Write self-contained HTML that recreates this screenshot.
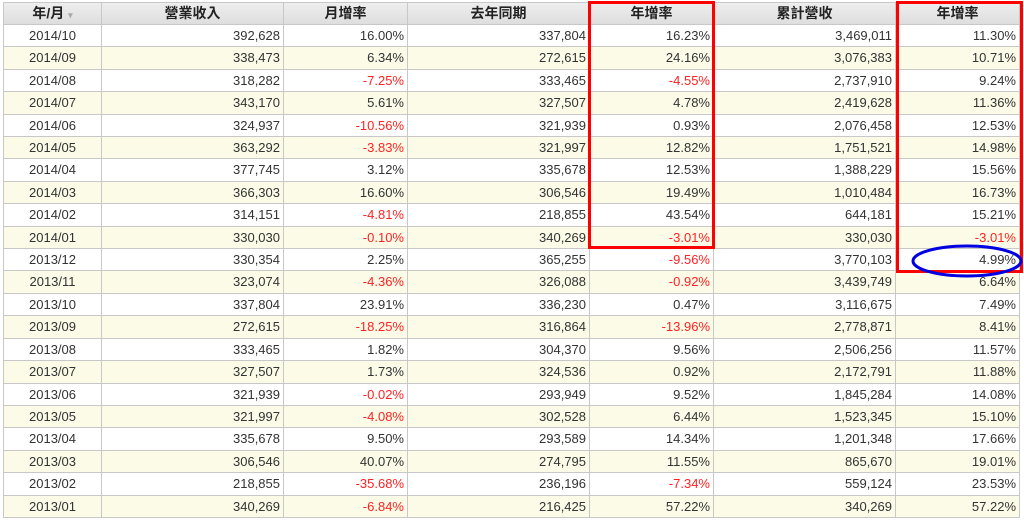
<!DOCTYPE html><html><head><meta charset="utf-8"><style>
body{margin:0;width:1024px;height:521px;background:#fff;overflow:hidden;position:relative;font-family:"Liberation Sans","Noto Sans CJK TC",sans-serif}
.t{position:absolute;left:3px;top:2px;width:1017px}
.r{display:flex;height:22.42px;border-bottom:1px solid #c8c8c8;box-sizing:border-box}
.r div{box-sizing:border-box;border-right:1px solid #c8c8c8;font-size:13px;color:#333;line-height:21px;text-align:right;padding-right:3px;white-space:nowrap}
.r div:first-child{text-align:center;padding:0;border-left:1px solid #c8c8c8}
.h{height:23px;background:linear-gradient(#eee,#dedede);border-top:1px solid #c8c8c8}
.h div{text-align:center!important;padding:0!important;font-weight:bold;font-size:14px;color:#222;line-height:21px}
.a{background:#fbfbe8}
.n{color:#f22!important}
.c1{width:99px}.c2{width:182px}.c3{width:124px}.c4{width:182px}.c5{width:124px}.c6{width:182px}.c7{width:124px}
.box{position:absolute;border:3px solid #f00;box-sizing:border-box}
</style></head><body><div class="t">
<div class="r h"><div class="c1">年/月 <span style="color:#aaa;font-size:9px">▾</span></div><div class="c2">營業收入</div><div class="c3">月增率</div><div class="c4">去年同期</div><div class="c5">年增率</div><div class="c6">累計營收</div><div class="c7">年增率</div></div>
<div class="r"><div class="c1">2014/10</div><div class="c2">392,628</div><div class="c3">16.00%</div><div class="c4">337,804</div><div class="c5">16.23%</div><div class="c6">3,469,011</div><div class="c7">11.30%</div></div>
<div class="r a"><div class="c1">2014/09</div><div class="c2">338,473</div><div class="c3">6.34%</div><div class="c4">272,615</div><div class="c5">24.16%</div><div class="c6">3,076,383</div><div class="c7">10.71%</div></div>
<div class="r"><div class="c1">2014/08</div><div class="c2">318,282</div><div class="c3 n">-7.25%</div><div class="c4">333,465</div><div class="c5 n">-4.55%</div><div class="c6">2,737,910</div><div class="c7">9.24%</div></div>
<div class="r a"><div class="c1">2014/07</div><div class="c2">343,170</div><div class="c3">5.61%</div><div class="c4">327,507</div><div class="c5">4.78%</div><div class="c6">2,419,628</div><div class="c7">11.36%</div></div>
<div class="r"><div class="c1">2014/06</div><div class="c2">324,937</div><div class="c3 n">-10.56%</div><div class="c4">321,939</div><div class="c5">0.93%</div><div class="c6">2,076,458</div><div class="c7">12.53%</div></div>
<div class="r a"><div class="c1">2014/05</div><div class="c2">363,292</div><div class="c3 n">-3.83%</div><div class="c4">321,997</div><div class="c5">12.82%</div><div class="c6">1,751,521</div><div class="c7">14.98%</div></div>
<div class="r"><div class="c1">2014/04</div><div class="c2">377,745</div><div class="c3">3.12%</div><div class="c4">335,678</div><div class="c5">12.53%</div><div class="c6">1,388,229</div><div class="c7">15.56%</div></div>
<div class="r a"><div class="c1">2014/03</div><div class="c2">366,303</div><div class="c3">16.60%</div><div class="c4">306,546</div><div class="c5">19.49%</div><div class="c6">1,010,484</div><div class="c7">16.73%</div></div>
<div class="r"><div class="c1">2014/02</div><div class="c2">314,151</div><div class="c3 n">-4.81%</div><div class="c4">218,855</div><div class="c5">43.54%</div><div class="c6">644,181</div><div class="c7">15.21%</div></div>
<div class="r a"><div class="c1">2014/01</div><div class="c2">330,030</div><div class="c3 n">-0.10%</div><div class="c4">340,269</div><div class="c5 n">-3.01%</div><div class="c6">330,030</div><div class="c7 n">-3.01%</div></div>
<div class="r"><div class="c1">2013/12</div><div class="c2">330,354</div><div class="c3">2.25%</div><div class="c4">365,255</div><div class="c5 n">-9.56%</div><div class="c6">3,770,103</div><div class="c7">4.99%</div></div>
<div class="r a"><div class="c1">2013/11</div><div class="c2">323,074</div><div class="c3 n">-4.36%</div><div class="c4">326,088</div><div class="c5 n">-0.92%</div><div class="c6">3,439,749</div><div class="c7">6.64%</div></div>
<div class="r"><div class="c1">2013/10</div><div class="c2">337,804</div><div class="c3">23.91%</div><div class="c4">336,230</div><div class="c5">0.47%</div><div class="c6">3,116,675</div><div class="c7">7.49%</div></div>
<div class="r a"><div class="c1">2013/09</div><div class="c2">272,615</div><div class="c3 n">-18.25%</div><div class="c4">316,864</div><div class="c5 n">-13.96%</div><div class="c6">2,778,871</div><div class="c7">8.41%</div></div>
<div class="r"><div class="c1">2013/08</div><div class="c2">333,465</div><div class="c3">1.82%</div><div class="c4">304,370</div><div class="c5">9.56%</div><div class="c6">2,506,256</div><div class="c7">11.57%</div></div>
<div class="r a"><div class="c1">2013/07</div><div class="c2">327,507</div><div class="c3">1.73%</div><div class="c4">324,536</div><div class="c5">0.92%</div><div class="c6">2,172,791</div><div class="c7">11.88%</div></div>
<div class="r"><div class="c1">2013/06</div><div class="c2">321,939</div><div class="c3 n">-0.02%</div><div class="c4">293,949</div><div class="c5">9.52%</div><div class="c6">1,845,284</div><div class="c7">14.08%</div></div>
<div class="r a"><div class="c1">2013/05</div><div class="c2">321,997</div><div class="c3 n">-4.08%</div><div class="c4">302,528</div><div class="c5">6.44%</div><div class="c6">1,523,345</div><div class="c7">15.10%</div></div>
<div class="r"><div class="c1">2013/04</div><div class="c2">335,678</div><div class="c3">9.50%</div><div class="c4">293,589</div><div class="c5">14.34%</div><div class="c6">1,201,348</div><div class="c7">17.66%</div></div>
<div class="r a"><div class="c1">2013/03</div><div class="c2">306,546</div><div class="c3">40.07%</div><div class="c4">274,795</div><div class="c5">11.55%</div><div class="c6">865,670</div><div class="c7">19.01%</div></div>
<div class="r"><div class="c1">2013/02</div><div class="c2">218,855</div><div class="c3 n">-35.68%</div><div class="c4">236,196</div><div class="c5 n">-7.34%</div><div class="c6">559,124</div><div class="c7">23.53%</div></div>
<div class="r a"><div class="c1">2013/01</div><div class="c2">340,269</div><div class="c3 n">-6.84%</div><div class="c4">216,425</div><div class="c5">57.22%</div><div class="c6">340,269</div><div class="c7">57.22%</div></div>
</div>
<div class="box" style="left:588px;top:1px;width:127px;height:248px"></div>
<div class="box" style="left:896px;top:1px;width:127px;height:272px"></div>
<svg style="position:absolute;left:0;top:0" width="1024" height="521"><ellipse cx="967" cy="261" rx="54" ry="15" fill="none" stroke="#0000e0" stroke-width="3"/></svg>
</body></html>
